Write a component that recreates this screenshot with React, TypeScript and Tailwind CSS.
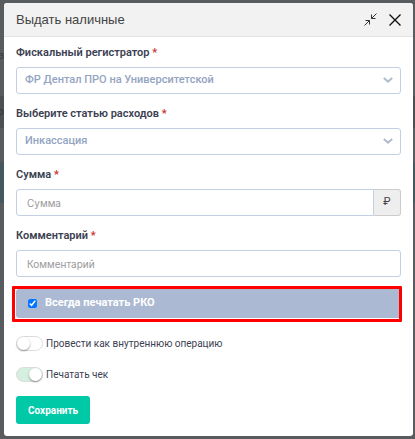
import { ReactNode } from "react";

const control =
  "block h-[27px] w-full rounded-[3px] border border-[#c3cfe2] bg-white outline-none";
const textInput =
  "px-2.5 font-[Inter,sans-serif] text-[10px] text-[#555] placeholder:text-[#999]";

function Field({ id, label, children }: { id: string; label: string; children: ReactNode }) {
  return (
    <div className="mb-3">
      <label htmlFor={id} className="mb-1.5 block text-[11px] leading-4 font-semibold text-[#3c4152]">
        {label} <span className="text-[#c9302c]">*</span>
      </label>
      {children}
    </div>
  );
}

function Select({ id, value }: { id: string; value: string }) {
  return (
    <div className="relative">
      <select
        id={id}
        className={`${control} appearance-none pr-8 pl-2 text-[11px] font-medium text-[#93a4c1]`}
      >
        <option>{value}</option>
      </select>
      <svg
        viewBox="0 0 10 6"
        className="pointer-events-none absolute top-[10px] right-2 h-1.5 w-2.5 fill-none stroke-[#b3bccb] stroke-2"
      >
        <path d="M.8 1L5 4.6 9.2 1" />
      </svg>
    </div>
  );
}

function Switch({ label, checked }: { label: string; checked?: boolean }) {
  return (
    <label className="flex h-4 items-center gap-[3px] text-[10px] text-[#3c4152]">
      <input type="checkbox" role="switch" defaultChecked={checked} className="peer sr-only" />
      <span className="flex h-[15px] w-[27px] rounded-full border border-[#dcdcdc] bg-white peer-checked:justify-end peer-checked:bg-[#d5efe0]">
        <span className="size-[13px] rounded-full bg-white shadow-[0_1px_2px_rgba(0,0,0,0.4)]" />
      </span>
      {label}
    </label>
  );
}

export default function App() {
  return (
    <div className="relative min-h-screen bg-[#585c5f] pt-[3px] pr-0.5 pb-[3px] pl-1 font-[Roboto,sans-serif]">
      {/* Page rows behind the dialog */}
      <div className="absolute inset-x-0 top-0 text-[11px] leading-4 text-[#3a3e41]">
        <div className="h-12" />
        <div className="flex h-12 w-1 justify-end overflow-hidden">з</div>
        <div className="h-8 bg-[#4c5053]">
          <div className="flex h-8 w-1 items-center justify-end overflow-hidden font-bold">ер</div>
        </div>
        <div className="h-[34px]" />
        <div className="h-[41px] bg-[#45585f]" />
      </div>

      <div role="dialog" aria-labelledby="title" className="relative overflow-hidden rounded-[3px] bg-white">
        <header className="flex h-[34px] items-center justify-between border-b border-[#e2e2e2] bg-[#f2f2f2] px-3">
          <h1 id="title" className="font-['Liberation_Sans',Arial,sans-serif] text-[13px] text-[#444]">
            Выдать наличные
          </h1>
          <div className="flex items-center gap-3">
            <button type="button" aria-label="Свернуть">
              <svg viewBox="0 0 13 13" className="size-[13px] fill-none stroke-[#333]">
                <path d="M.5 12.5l5-5M1.5 7.5h4v4M12.5.5l-5 5M7.5 1.5v4h4" />
              </svg>
            </button>
            <button type="button" aria-label="Закрыть">
              <svg viewBox="0 0 12 12" className="size-3 fill-none stroke-[#111] stroke-[1.4]">
                <path d="M.5.5l11 11M11.5.5l-11 11" />
              </svg>
            </button>
          </div>
        </header>

        <form className="px-3 pt-2 pb-3">
          <Field id="registrar" label="Фискальный регистратор">
            <Select id="registrar" value="ФР Дентал ПРО на Университетской" />
          </Field>
          <Field id="expense" label="Выберите статью расходов">
            <Select id="expense" value="Инкассация" />
          </Field>
          <Field id="amount" label="Сумма">
            <div className="flex">
              <input id="amount" placeholder="Сумма" className={`${control} ${textInput} rounded-r-none`} />
              <span className="flex w-[27px] shrink-0 items-center justify-center rounded-r-[3px] border border-l-0 border-[#ccc] bg-[#eee] text-[11px] text-[#444]">
                ₽
              </span>
            </div>
          </Field>
          <Field id="comment" label="Комментарий">
            <input id="comment" placeholder="Комментарий" className={`${control} ${textInput}`} />
          </Field>

          {/* Highlighted option */}
          <div className="-mt-[3px] -mr-px mb-[13px] -ml-1 rounded-[1px] border-3 border-[#ff0000] pb-px pl-px">
            <label className="flex h-[29px] items-center gap-2 rounded-l-[3px] bg-[#abbad2] px-3 text-[11px] font-bold text-white">
              <input type="checkbox" defaultChecked className="size-[9px]" />
              Всегда печатать РКО
            </label>
          </div>

          <div className="mb-[14px] grid gap-[15px]">
            <Switch label="Провести как внутреннюю операцию" />
            <Switch label="Печатать чек" checked />
          </div>

          <button type="submit" className="h-7 rounded-[3px] bg-[#00c9a7] px-3 text-[10px] font-bold text-white">
            Сохранить
          </button>
        </form>
      </div>
    </div>
  );
}
